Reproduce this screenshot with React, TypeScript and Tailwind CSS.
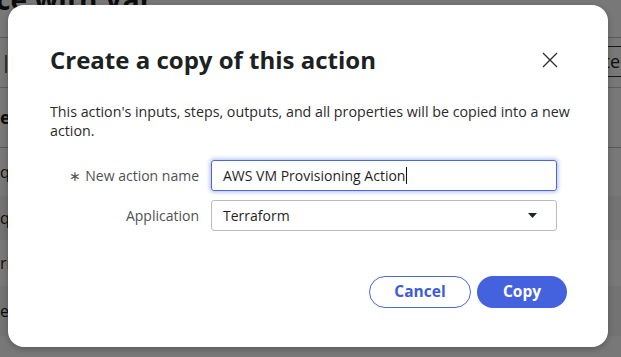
import React from "react";

export default function App() {
  const font = { fontFamily: '"Open Sans", "Noto Sans", sans-serif' };
  return (
    <div className="relative w-[621px] h-[357px] overflow-hidden bg-white" style={font}>
      {/* underlying page */}
      <div className="flex flex-col w-full h-full text-[#1a1a1a]">
        <div className="h-[38px] border-b border-[#bdbdbd]">
          <div className="mt-[-16px] ml-[-4px] text-[28px] font-bold leading-[30px] whitespace-nowrap">ce with Var</div>
        </div>
        <div className="h-[50px] border-b border-[#c8c8c8] flex items-center justify-between">
          <span className="text-[18px] pl-[1px]">|l</span>
          <div className="h-[31px] mt-[-2px] border border-[#333] rounded-[3px] flex items-center pl-[2px] pr-[30px] mr-[-30px] text-[18px]">te</div>
        </div>
        <div className="h-[60px] border-b border-[#bdbdbd] flex items-center text-[18px] font-bold">e</div>
        <div className="h-[48px] flex items-center text-[16px] bg-[#ffffff]">q</div>
        <div className="h-[44px] flex items-center text-[16px] bg-[#f4f4f4]">q.</div>
        <div className="h-[46px] flex items-center text-[16px] bg-[#ffffff]">rip</div>
        <div className="h-[50px] flex items-center text-[16px] bg-[#f4f4f4]">e_</div>
        <div className="flex-1 bg-white"></div>
      </div>

      {/* overlay */}
      <div className="absolute inset-0 bg-[rgba(0,0,0,0.53)]"></div>

      {/* dialog */}
      <div className="absolute left-[8px] top-[5px] w-[600px] h-[342px] bg-white rounded-[16px] shadow-[0_2px_6px_rgba(0,0,0,0.25)] flex flex-col pl-[42px] pr-[41px]">
        <div className="flex items-center justify-between mt-[39px] h-[32px]">
          <h1 className="text-[24px] font-bold text-[#1c2121] leading-[30px]">Create a copy of this action</h1>
          <button className="w-[24px] h-[24px] flex items-center justify-center mr-[5px] mt-[-1px]">
            <svg width="16" height="16" viewBox="0 0 16 16" fill="none" stroke="#2b3333" strokeWidth="1.4">
              <path d="M1 1 L15 15 M15 1 L1 15" />
            </svg>
          </button>
        </div>
        <p className="mt-[26px] mr-[-12px] text-[14.25px] leading-[19px] text-[#2a2a2a]">
          This action's inputs, steps, outputs, and all properties will be copied into a new action.
        </p>
        <div className="mt-[20px] flex flex-col gap-[9px]">
          <div className="flex items-center h-[31px]">
            <label className="w-[161px] shrink-0 text-right pr-[12px] text-[14px] text-[#4f5252] whitespace-nowrap">
              <span className="text-[#555] mr-[4px]">∗</span>New action name
            </label>
            <div className="w-[346px] h-[31px] rounded-[3px] border border-[#4a68dc] shadow-[0_0_4px_1px_rgba(74,104,220,0.45)] flex items-center pl-[11px] text-[14px] text-[#1f1f1f]">
              AWS VM Provisioning Action<span className="inline-block w-[1px] h-[17px] bg-[#111] ml-[1px]"></span>
            </div>
          </div>
          <div className="flex items-center h-[31px]">
            <label className="w-[161px] shrink-0 text-right pr-[12px] text-[14px] text-[#4f5252]">Application</label>
            <div className="w-[346px] h-[31px] rounded-[3px] border border-[#b9bcbc] flex items-center justify-between pl-[11px] pr-[19px] text-[14px] text-[#1f1f1f]">
              <span>Terraform</span>
              <svg width="9" height="5" viewBox="0 0 9 5"><path d="M0 0 L9 0 L4.5 5 Z" fill="#1f2424" /></svg>
            </div>
          </div>
        </div>
        <div className="mt-[45px] flex justify-end gap-[6px]">
          <button className="w-[102px] h-[32px] rounded-full border border-[#4a66dc] text-[#3d5bd9] text-[15.5px] font-bold">Cancel</button>
          <button className="w-[90px] h-[32px] rounded-full bg-[#4562de] text-white text-[15.5px] font-bold">Copy</button>
        </div>
      </div>
    </div>
  );
}
